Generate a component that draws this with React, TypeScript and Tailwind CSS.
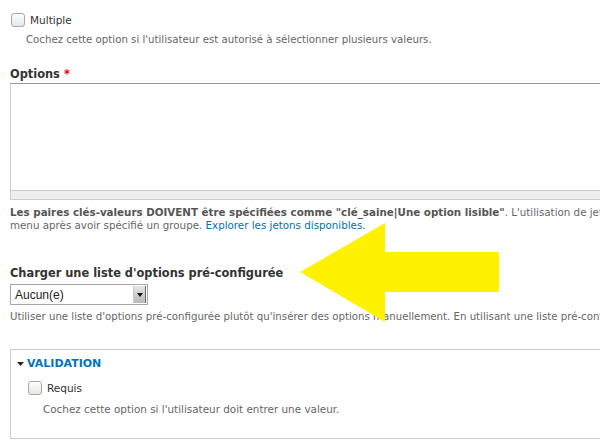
const Checkbox = () => (
  <span className="inline-block w-[14px] h-[14px] shrink-0 rounded-[3px] border border-[#a8a8a8] bg-gradient-to-b from-[#fdfdfd] to-[#e6e6e6]" />
);

export default function App() {
  return (
    <div className="relative w-[600px] h-[444px] overflow-hidden bg-white font-['DejaVu_Sans',sans-serif] text-[#333]">
      <div className="w-[1000px] pl-[10px]">
        {/* Multiple */}
        <div className="mt-[13px] flex items-center h-[14px] pl-[1px]">
          <Checkbox />
          <span className="ml-[5px] text-[10.5px] leading-[14px]">Multiple</span>
        </div>
        <div className="mt-[6px] pl-[16px] text-[10.2px] leading-[14px] text-[#666] whitespace-nowrap">
          Cochez cette option si l'utilisateur est autorisé à sélectionner plusieurs valeurs.
        </div>

        {/* Options */}
        <div className="mt-[20px] text-[11.4px] leading-[14px] font-bold text-[#333]">
          Options <span className="text-[#e00]">*</span>
        </div>
        <div className="mt-[2px] w-[900px]">
          <div className="h-[107px] border border-[#ccc] border-t-[#999] border-b-0 bg-white" />
          <div className="h-[10px] border border-[#ccc] bg-[#eee]" />
        </div>
        <div className="mt-[6px] text-[10.3px] leading-[13px] text-[#666] whitespace-nowrap">
          <div>
            <span className="font-bold text-[#555]">
              Les paires clés-valeurs DOIVENT être spécifiées comme "clé_saine|Une option lisible"
            </span>
            . L'utilisation de jetons est autorisée pour la partie lisible, et elle peut être modifiée dans le
          </div>
          <div>
            menu après avoir spécifié un groupe.{" "}
            <span className="text-[#0071b3]">Explorer les jetons disponibles.</span>
          </div>
        </div>

        {/* Charger */}
        <div className="mt-[34px] text-[11.4px] leading-[14px] font-bold text-[#333]">
          Charger une liste d'options pré-configurée
        </div>
        <div className="mt-[4px] flex w-[138px] h-[21px] border border-[#a6a6a6] bg-white">
          <div className="flex-1 flex items-center pl-[4px] font-['Liberation_Sans',sans-serif] text-[12px] text-[#222]">
            Aucun(e)
          </div>
          <div className="w-[13px] my-[1px] mr-[1px] flex items-center justify-center bg-gradient-to-b from-[#e6e6e6] to-[#b8b8b8] border-l border-[#c8c8c8] border-r border-r-[#6a6a6a]">
            <svg width="6" height="4" viewBox="0 0 6 4">
              <polygon points="0,0 6,0 3,4" fill="#111" />
            </svg>
          </div>
        </div>
        <div className="mt-[5px] text-[10.2px] leading-[14px] text-[#666] whitespace-nowrap">
          Utiliser une liste d'options pré-configurée plutôt qu'insérer des options manuellement. En utilisant une liste pré-configurée, les options seront
        </div>

        {/* Validation fieldset */}
        <div className="mt-[25px] w-[900px] h-[90px] border border-[#ccc] pl-[6px] pt-[7px]">
          <div className="flex items-center h-[14px]">
            <svg width="7" height="4" viewBox="0 0 7 4">
              <polygon points="0,0 7,0 3.5,4" fill="#222" />
            </svg>
            <span className="ml-[3px] text-[11px] leading-[14px] font-bold text-[#0074bd]">VALIDATION</span>
          </div>
          <div className="mt-[10px] pl-[11px] flex items-center h-[14px]">
            <Checkbox />
            <span className="ml-[5px] text-[10.5px] leading-[14px]">Requis</span>
          </div>
          <div className="mt-[7px] pl-[26px] text-[10.4px] leading-[14px] text-[#666] whitespace-nowrap">
            Cochez cette option si l'utilisateur doit entrer une valeur.
          </div>
        </div>
      </div>

      {/* Annotation arrow */}
      <svg className="absolute left-0 top-0 pointer-events-none" width="600" height="444" viewBox="0 0 600 444">
        <polygon
          points="300,272 385,223 385,252 499,252 499,292 385,292 385,322"
          fill="#fff200"
        />
      </svg>
    </div>
  );
}
